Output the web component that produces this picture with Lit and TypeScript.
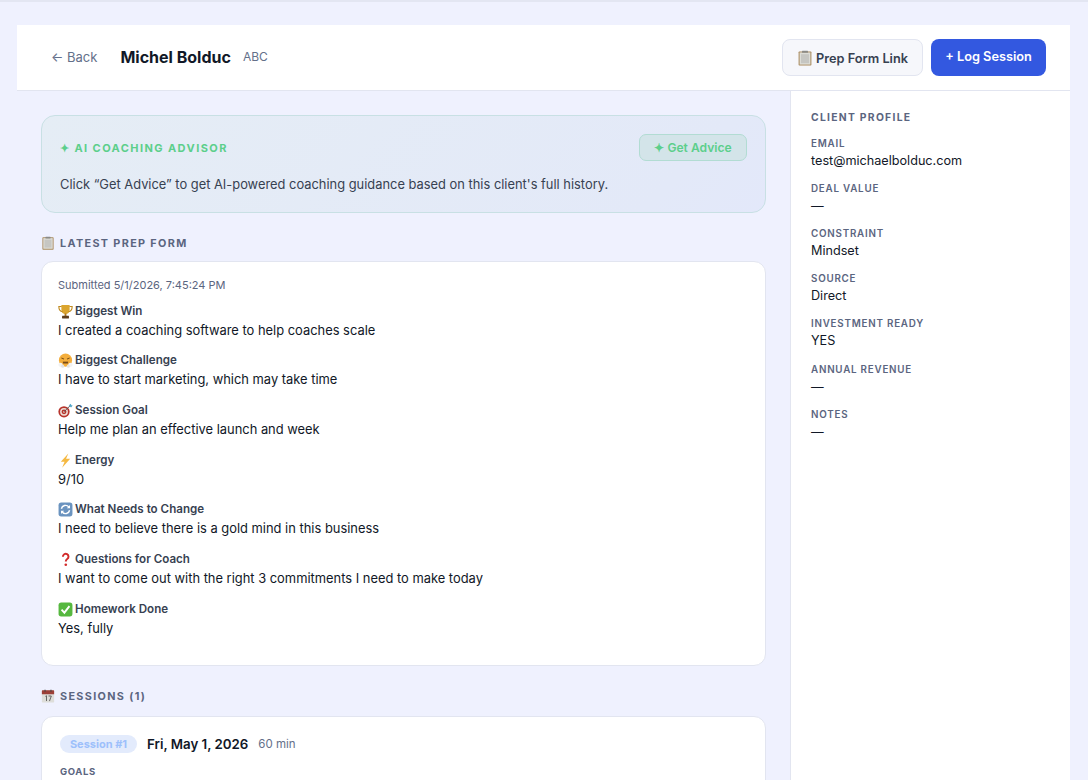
import { LitElement, html, css, svg } from "lit";
import { customElement } from "lit/decorators.js";

const clipboard = svg`<rect x="1.6" y="1.4" width="12.8" height="14.2" rx=".8" fill="#a98a5c"/><rect x="2.6" y="2.4" width="10.8" height="12.2" fill="#dcdcd6"/><rect x="4" y="4.2" width="8" height="9" fill="#c6c6c2"/><rect x="5" y=".8" width="6" height="2" rx=".5" fill="#8a8a86"/>`;
const icons: Record<string, unknown> = {
  clipboard,
  trophy: svg`<path d="M3.6 1h8.8v5.4c0 2.8-1.8 4.2-4.4 4.2S3.6 9.2 3.6 6.4z" fill="#dba52e"/><path d="M3.8 2.6H.9c0 3.4 1.2 5.2 4 5.6M12.2 2.6h2.9c0 3.4-1.2 5.2-4 5.6" fill="none" stroke="#c08a1f" stroke-width="1.2"/><rect x="7" y="10" width="2" height="3" fill="#b57a1a"/><rect x="4.3" y="12.6" width="7.4" height="2.8" rx=".4" fill="#5e3d1c"/>`,
  face: svg`<circle cx="8" cy="7.6" r="7" fill="#f4ae3c"/><path d="M3.6 5.2l2.8 1.3M12.4 5.2L9.6 6.5" stroke="#6b4312" stroke-width="1.1"/><path d="M5.2 9.2h5.6v2H5.2z" fill="#7a4b16"/><circle cx="2.7" cy="12.6" r="2.3" fill="#f2f2f2"/><circle cx="13.3" cy="12.6" r="2.3" fill="#f2f2f2"/><circle cx="5" cy="14" r="1.7" fill="#e3e3e3"/><circle cx="11" cy="14" r="1.7" fill="#e3e3e3"/>`,
  target: svg`<circle cx="6.4" cy="9.4" r="6" fill="#b7342c"/><circle cx="6.4" cy="9.4" r="4.2" fill="#eeddd6"/><circle cx="6.4" cy="9.4" r="2.6" fill="#b7342c"/><circle cx="6.4" cy="9.4" r="1" fill="#eeddd6"/><path d="M6.4 9.4L13 2.8" stroke="#555" stroke-width="1"/><path d="M11.5 2.5l2.2-1.7.5 1.5 1.5.4-1.8 2.1z" fill="#4fa6c9"/>`,
  bolt: svg`<path d="M11 .4L3 9.2h4L4.4 15.6l8.6-9.4H8.6z" fill="#f5b942"/>`,
  cycle: svg`<rect x=".6" y=".6" width="14.8" height="14.8" rx="2.8" fill="#6a93bf"/><path d="M3.6 7.2a4.5 4.5 0 0 1 7.9-1.9M12.4 8.8a4.5 4.5 0 0 1-7.9 1.9" fill="none" stroke="#fff" stroke-width="1.5"/><path d="M12.8 3.2v3.4H9.4zM3.2 12.8V9.4h3.4z" fill="#fff"/>`,
  question: svg`<path d="M5.2 5a3 3 0 1 1 4.6 2.5C8.7 8.2 8.3 8.8 8.3 10.2" fill="none" stroke="#d22c2c" stroke-width="2.1"/><circle cx="8.3" cy="13.6" r="1.4" fill="#d22c2c"/>`,
  check: svg`<rect x=".6" y=".6" width="14.8" height="14.8" rx="2.8" fill="#56b83f"/><path d="M3.8 8.2l3 3.2 5.4-7" fill="none" stroke="#fff" stroke-width="2"/>`,
  calendar: svg`<rect x="1" y="1.5" width="14" height="14" rx=".8" fill="#dededa"/><path d="M1 2.3a.8.8 0 0 1 .8-.8h12.4a.8.8 0 0 1 .8.8V6H1z" fill="#9c3f38"/><rect x="4" y=".8" width="1.2" height="2.4" fill="#444"/><rect x="10.8" y=".8" width="1.2" height="2.4" fill="#444"/><path d="M5 8.4l1.3-.7v6M8.6 8h3.2l-2.1 5.8" fill="none" stroke="#555" stroke-width="1"/>`,
};

const emoji = (name: string, size = 15) =>
  html`<svg class="emoji" width=${size} height=${size} viewBox="0 0 16 16" aria-hidden="true">${icons[name]}</svg>`;

const answers = [
  ["trophy", "Biggest Win", "I created a coaching software to help coaches scale"],
  ["face", "Biggest Challenge", "I have to start marketing, which may take time"],
  ["target", "Session Goal", "Help me plan an effective launch and week"],
  ["bolt", "Energy", "9/10"],
  ["cycle", "What Needs to Change", "I need to believe there is a gold mind in this business"],
  ["question", "Questions for Coach", "I want to come out with the right 3 commitments I need to make today"],
  ["check", "Homework Done", "Yes, fully"],
];

const profile = [
  ["Email", "test@michaelbolduc.com"],
  ["Deal Value", "—"],
  ["Constraint", "Mindset"],
  ["Source", "Direct"],
  ["Investment Ready", "YES"],
  ["Annual Revenue", "—"],
  ["Notes", "—"],
];

@customElement("app-root")
export class AppRoot extends LitElement {
  static styles = css`
    :host {
      display: block;
      height: 780px;
      overflow: hidden;
      box-sizing: border-box;
      background: #eff1fe;
      border-top: 2px solid #e3e6f2;
      padding: 23px 18px 0 17px;
      font-family: Inter, "Liberation Sans", sans-serif;
      color: #111827;
    }
    * { box-sizing: border-box; }
    .emoji { flex: none; display: block; }
    .topbar {
      height: 66px;
      background: #fff;
      border-bottom: 1px solid #e2e5f0;
      display: flex;
      align-items: center;
      padding: 0 24px 0 34px;
    }
    .identity { display: flex; align-items: center; padding-bottom: 2px; }
    .back { font-size: 13px; color: #64708a; margin-right: 23px; }
    .name { font-size: 16px; font-weight: 700; color: #111827; margin-right: 12px; }
    .tag { font-size: 12px; color: #64708a; }
    .actions { margin-left: auto; display: flex; gap: 8px; }
    .btn {
      height: 37px;
      border-radius: 8px;
      font: 600 12.75px Inter, "Liberation Sans", sans-serif;
      display: flex;
      align-items: center;
      justify-content: center;
      padding: 0;
    }
    .btn.light { width: 141px; gap: 3px; background: #f6f7fb; border: 1px solid #e2e5f0; color: #374151; padding-top: 1px; }
    .btn.primary { width: 115px; background: #3358e0; border: 0; color: #fff; padding-bottom: 2px; }
    .body { display: flex; height: 700px; }
    main { flex: 1; min-width: 0; padding: 24px 24px 0; }
    aside {
      width: 280px;
      flex: none;
      background: #fff;
      border-left: 1px solid #e2e5f0;
      padding: 20px;
    }
    .advisor {
      height: 98px;
      border: 1px solid #c8e0e4;
      border-radius: 14px;
      background: linear-gradient(135deg, #e5edf5 0%, #e3e9f8 85%, #e3e8fa 100%);
      padding: 18px 18px 0;
    }
    .advisor-head { display: flex; justify-content: space-between; align-items: center; height: 27px; }
    .advisor-title { font-size: 11px; font-weight: 700; letter-spacing: 1.42px; color: #5ccf8b; }
    .advice {
      width: 108px;
      height: 27px;
      border-radius: 7px;
      background: #d3e4e9;
      border: 1px solid #b2dcd3;
      color: #5ccf8b;
      font: 600 12.1px Inter, "Liberation Sans", sans-serif;
      display: flex;
      align-items: center;
      justify-content: center;
      padding: 0;
    }
    .advisor p { margin: 14px 0 0; font-size: 12.88px; line-height: 20px; color: #374151; }
    .section {
      display: flex;
      align-items: center;
      gap: 5px;
      height: 14px;
      font-size: 10.8px;
      font-weight: 700;
      letter-spacing: 1.36px;
      color: #5b6580;
      text-transform: uppercase;
    }
    .section.first { margin: 23px 0 11px; }
    .section.second { margin: 23px 0 13px; }
    .card {
      background: #fff;
      border: 1px solid #e2e5f0;
      border-radius: 12px;
      padding: 16px;
    }
    .prep { height: 405px; }
    .stamp { font-size: 11px; line-height: 14px; color: #5b6580; margin-bottom: 11.6px; }
    .answer { margin-bottom: 12.67px; }
    .q {
      display: flex;
      align-items: center;
      gap: 2px;
      font-size: 11.6px;
      font-weight: 600;
      line-height: 15px;
      color: #374151;
    }
    .a { font-size: 12.9px; line-height: 20px; margin-top: 2px; color: #111827; }
    .session { height: 120px; padding: 17px 18px; }
    .session-head { display: flex; align-items: center; height: 20px; }
    .pill {
      width: 77px;
      height: 18px;
      border-radius: 9px;
      background: #e3ebfc;
      color: #9dc0fb;
      font-size: 11px;
      font-weight: 700;
      text-align: center;
      line-height: 18px;
      margin-right: 10px;
    }
    .date { font-size: 13.3px; font-weight: 600; color: #111827; margin-right: 10px; }
    .mins { font-size: 11.5px; color: #64708a; }
    .goals { margin-top: 12px; font-size: 9.5px; font-weight: 700; letter-spacing: .6px; color: #5b6580; }
    .profile-title {
      font-size: 10.3px;
      font-weight: 700;
      letter-spacing: 1.3px;
      color: #5b6580;
      line-height: 13px;
      margin-bottom: 12.7px;
    }
    .field { height: 45.2px; }
    .field .label {
      font-size: 9.8px;
      font-weight: 600;
      letter-spacing: .78px;
      color: #5b6580;
      line-height: 13px;
      text-transform: uppercase;
    }
    .field .value { font-size: 12.65px; line-height: 20px; color: #111827; margin-top: 1px; }
  `;

  render() {
    return html`
      <div class="topbar">
        <div class="identity">
          <span class="back">← Back</span>
          <span class="name">Michel Bolduc</span>
          <span class="tag">ABC</span>
        </div>
        <div class="actions">
          <button class="btn light">${emoji("clipboard", 16)}Prep Form Link</button>
          <button class="btn primary">+ Log Session</button>
        </div>
      </div>
      <div class="body">
        <main>
          <div class="advisor">
            <div class="advisor-head">
              <span class="advisor-title">✦ AI COACHING ADVISOR</span>
              <button class="advice">✦ Get Advice</button>
            </div>
            <p>Click “Get Advice” to get AI-powered coaching guidance based on this client's full history.</p>
          </div>
          <div class="section first">${emoji("clipboard", 14)}Latest Prep Form</div>
          <div class="card prep">
            <div class="stamp">Submitted 5/1/2026, 7:45:24 PM</div>
            ${answers.map(
              ([icon, q, a]) => html`<div class="answer">
                <div class="q">${emoji(icon)}${q}</div>
                <div class="a">${a}</div>
              </div>`
            )}
          </div>
          <div class="section second">${emoji("calendar", 14)}Sessions (1)</div>
          <div class="card session">
            <div class="session-head">
              <span class="pill">Session #1</span>
              <span class="date">Fri, May 1, 2026</span>
              <span class="mins">60 min</span>
            </div>
            <div class="goals">GOALS</div>
          </div>
        </main>
        <aside>
          <div class="profile-title">CLIENT PROFILE</div>
          ${profile.map(
            ([l, v]) => html`<div class="field">
              <div class="label">${l}</div>
              <div class="value">${v}</div>
            </div>`
          )}
        </aside>
      </div>
    `;
  }
}
